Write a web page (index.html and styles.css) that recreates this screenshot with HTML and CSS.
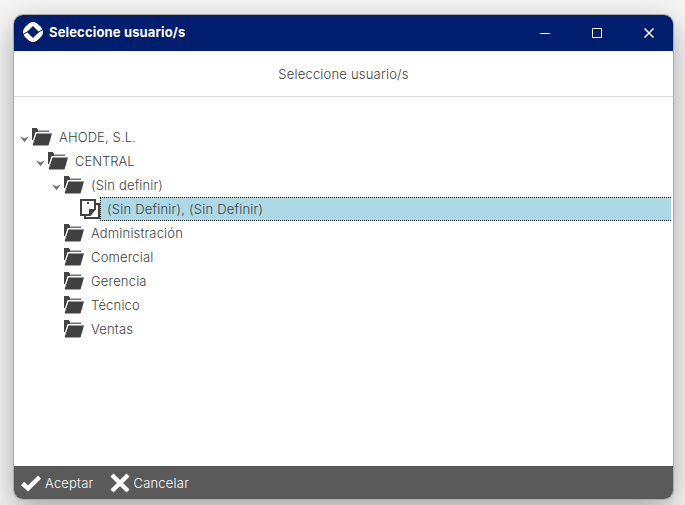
FILE: index.html
```html
<!DOCTYPE html>
<html lang="es">
<head>
<meta charset="utf-8">
<title>Seleccione usuario/s</title>
<link rel="stylesheet" href="styles.css">
</head>
<body>
<svg class="defs" width="0" height="0">
  <symbol id="folder" viewBox="0 0 20 18"><path d="M0 0h5l1 2v2H3.500L1 12H0z M4.500 5.500H20L16.500 17.500H.5z"/><path opacity=".75" d="M6 2.500h11v1.500H6z"/></symbol>
  <symbol id="arrow" viewBox="0 0 9 6"><path d="M0 .5L4.500 2.500 9 .5 4.500 6z"/></symbol>
</svg>
<main class="window">
  <header class="titlebar">
    <svg class="logo" viewBox="0 0 20 20"><path fill="#fff" d="M6.500 1Q10-1 13.500 1L17.500 4.500Q20 7 20 10T17.500 15.500L13.500 19Q10 21 6.500 19L2.500 15.500Q0 13 0 10T2.500 4.500z"/><path fill="#001d6e" d="M10 4L16 10 10 16 4 10z"/><path stroke="#001d6e" stroke-width="1" d="M0 12.500L6 9M14 11l6-3.500"/></svg>
    <h1>Seleccione usuario/s</h1>
    <div class="controls">
      <svg viewBox="0 0 10 10"><path d="M0 5.500h10"/></svg>
      <svg class="maximize" viewBox="0 0 10 10"><path d="M.5.5h9v9h-9z"/></svg>
      <svg class="close" viewBox="0 0 10 10"><path d="M.5.5l9 9M9.500.5l-9 9"/></svg>
    </div>
  </header>
  <div class="heading">Seleccione usuario/s</div>
  <div class="tree">
    <div class="row level-0"><svg class="arrow"><use href="#arrow"/></svg><svg class="folder"><use href="#folder"/></svg><span>AHODE, S.L.</span></div>
    <div class="row level-1"><svg class="arrow"><use href="#arrow"/></svg><svg class="folder"><use href="#folder"/></svg><span>CENTRAL</span></div>
    <div class="row level-2"><svg class="arrow"><use href="#arrow"/></svg><svg class="folder"><use href="#folder"/></svg><span>(Sin definir)</span></div>
    <div class="row level-3"><svg class="note" viewBox="0 0 20 20"><path fill="none" stroke="#414141" stroke-width="2" d="M1 1h14v9l-5 6H1zM16 5h3v14H5v-3"/><path fill="#414141" d="M9 10h6.500L9 16.500zM7 3h2v2H7z"/></svg><span class="selected">(Sin Definir), (Sin Definir)</span></div>
    <div class="row level-2 leaf"><svg class="folder"><use href="#folder"/></svg><span>Administración</span></div>
    <div class="row level-2 leaf"><svg class="folder"><use href="#folder"/></svg><span>Comercial</span></div>
    <div class="row level-2 leaf"><svg class="folder"><use href="#folder"/></svg><span>Gerencia</span></div>
    <div class="row level-2 leaf"><svg class="folder"><use href="#folder"/></svg><span>Técnico</span></div>
    <div class="row level-2 leaf"><svg class="folder"><use href="#folder"/></svg><span>Ventas</span></div>
  </div>
  <footer class="actions">
    <div class="action"><svg viewBox="0 0 20 20"><path d="M1.500 10.500L7 15.500 18.500 4"/></svg><span>Aceptar</span></div>
    <div class="action"><svg viewBox="0 0 20 20"><path d="M2 2l16 16M18 2L2 18"/></svg><span>Cancelar</span></div>
  </footer>
</main>
</body>
</html>
```
FILE: styles.css
```css
* { box-sizing: border-box; }
body {
  margin: 0;
  height: 505px;
  padding: 15px 12px 6px 14px;
  overflow: hidden;
  background: #f5f5f5;
  font: 350 13px/24px Inter, sans-serif;
  letter-spacing: .17px;
  color: #414141;
}
.defs { position: absolute; }
.window {
  height: 484px;
  display: flex;
  flex-direction: column;
  overflow: hidden;
  border-radius: 9px;
  background: #fff;
  box-shadow: 0 0 0 1px #a9a9a9, 0 10px 30px rgba(0,0,0,.34);
}
.titlebar {
  height: 36px;
  display: flex;
  align-items: center;
  padding: 0 19px 0 9px;
  background: #001d6e;
  color: #fff;
}
.logo { width: 20px; height: 20px; margin-top: -2px; }
h1 { margin: -2px 0 0 6px; font-size: 13px; line-height: 24px; font-weight: 700; letter-spacing: .15px; }
.controls { display: flex; gap: 42px; margin-left: auto; }
.controls svg { width: 10px; height: 10px; fill: none; stroke: #fff; margin-top: -1px; }
.controls .close { stroke-width: 1.500; }
.heading { height: 46px; padding-top: 11px; text-align: center; letter-spacing: .2px; border-bottom: 1px solid #dcdce2; }
.tree { flex: 1; padding: 28px 2px 0 6px; }
.row { height: 24px; display: flex; align-items: center; }
.level-0 { letter-spacing: .13px; }
.level-1 { padding-left: 16px; letter-spacing: 0; }
.level-2 { padding-left: 32px; }
.level-3 { padding-left: 60px; }
.leaf { padding-left: 44px; }
.arrow { width: 9px; height: 6px; margin: 3px 3px 0 0; fill: #666; }
.folder { width: 20px; height: 18px; margin-right: 7px; fill: #414141; }
.note { width: 20px; height: 20px; flex: none; }
.selected { flex: 1; height: 24px; padding-left: 6px; line-height: 22px; letter-spacing: .22px; background: #add8e6; border: 1px dotted #222; border-right: 0; }
.actions { height: 33px; display: flex; align-items: center; gap: 16px; padding: 1px 7px 0; background: #5a5a5a; color: #fff; }
.action { display: flex; align-items: center; gap: 4px; letter-spacing: .2px; }
.action svg { width: 20px; height: 20px; fill: none; stroke: #fff; stroke-width: 4.500; }
```
